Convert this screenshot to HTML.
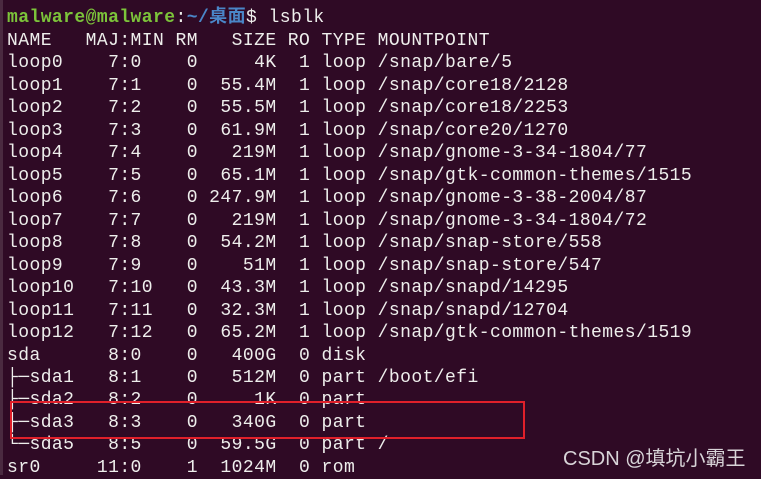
<!DOCTYPE html>
<html><head><meta charset="utf-8"><style>
html,body{margin:0;padding:0;}
body{width:761px;height:475px;background:#2f0a25;overflow:hidden;position:relative;}
pre{position:absolute;left:7px;top:-15px;margin:0;font-family:"Liberation Mono","Noto Sans CJK SC",monospace;font-size:18px;line-height:22.47px;color:#eeeeec;letter-spacing:0.43px;}
.g{color:#7cc43a;font-weight:bold;}
.b{color:#4a86c8;font-weight:bold;}
.box{position:absolute;left:10px;top:401px;width:511px;height:34px;border:2px solid #e0202a;}
.wm{position:absolute;left:563px;top:442px;font-family:"Liberation Sans","Noto Sans CJK SC",sans-serif;font-size:20px;color:#d8d4d8;}
.edge{position:absolute;left:0;top:0;width:3px;height:475px;background:#4a2a40;}
</style></head><body>
<div class="edge"></div>
<pre>  ~/-~.~/~.~~
<span class="g">malware@malware</span>:<span class="b">~/桌面</span>$ lsblk
NAME   MAJ:MIN RM   SIZE RO TYPE MOUNTPOINT
loop0    7:0    0     4K  1 loop /snap/bare/5
loop1    7:1    0  55.4M  1 loop /snap/core18/2128
loop2    7:2    0  55.5M  1 loop /snap/core18/2253
loop3    7:3    0  61.9M  1 loop /snap/core20/1270
loop4    7:4    0   219M  1 loop /snap/gnome-3-34-1804/77
loop5    7:5    0  65.1M  1 loop /snap/gtk-common-themes/1515
loop6    7:6    0 247.9M  1 loop /snap/gnome-3-38-2004/87
loop7    7:7    0   219M  1 loop /snap/gnome-3-34-1804/72
loop8    7:8    0  54.2M  1 loop /snap/snap-store/558
loop9    7:9    0    51M  1 loop /snap/snap-store/547
loop10   7:10   0  43.3M  1 loop /snap/snapd/14295
loop11   7:11   0  32.3M  1 loop /snap/snapd/12704
loop12   7:12   0  65.2M  1 loop /snap/gtk-common-themes/1519
sda      8:0    0   400G  0 disk 
├─sda1   8:1    0   512M  0 part /boot/efi
├─sda2   8:2    0     1K  0 part 
├─sda3   8:3    0   340G  0 part 
└─sda5   8:5    0  59.5G  0 part /
sr0     11:0    1  1024M  0 rom  </pre>
<div class="box"></div>
<div class="wm">CSDN @填坑小霸王</div>
</body></html>
